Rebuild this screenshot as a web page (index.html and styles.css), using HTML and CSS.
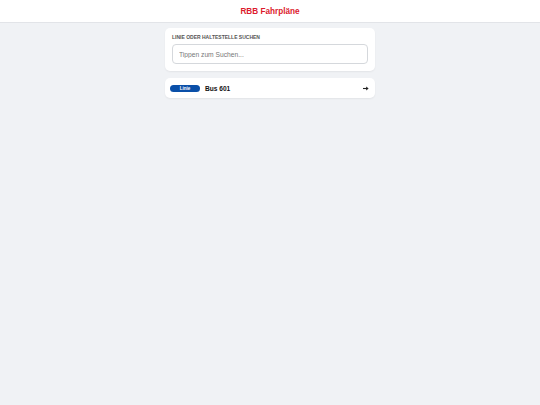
FILE: index.html
```html
<!DOCTYPE html>
<html lang="de">
<head>
    <meta charset="UTF-8">
    <meta name="viewport" content="width=device-width, initial-scale=1.0">
    <title>RBB Fahrpläne</title>
    <link rel="stylesheet" href="styles.css">
</head>
<body>
    <header class="top-bar">
        <h1>RBB Fahrpläne</h1>
    </header>
    <main class="container">
        <div class="card search-card">
            <label for="searchInput" class="search-label">Linie oder Haltestelle suchen</label>
            <input type="text" id="searchInput" placeholder="Tippen zum Suchen...">
        </div>
        <div class="card line-row">
            <span class="badge">Linie</span>
            <span class="line-name">Bus 601</span>
            <svg class="arrow" width="6" height="5" viewBox="0 0 6 5">
                <path d="M0 2.5H4.2" stroke="#222" stroke-width="1.1"/>
                <path d="M3.2 0.6L5.6 2.5L3.2 4.4Z" fill="#222"/>
            </svg>
        </div>
    </main>
</body>
</html>
```

FILE: styles.css
```css
body {
    font-family: "Liberation Sans", Arial, sans-serif;
    margin: 0;
    padding: 0;
    background-color: #f0f2f5;
    color: #222;
}
.top-bar {
    height: 22px;
    background: #fff;
    border-bottom: 1px solid #e2e4e8;
    display: flex;
    align-items: center;
    justify-content: center;
}
.top-bar h1 {
    margin: 0;
    font-size: 8.2px;
    font-weight: bold;
    color: #dc1a2e;
}
.container {
    width: 210px;
    margin: 5px auto;
    display: flex;
    flex-direction: column;
    gap: 7px;
}
.card {
    background: #fff;
    border-radius: 5px;
    box-shadow: 0 1px 2px rgba(0, 0, 0, 0.06);
}
.search-card {
    padding: 7px;
    display: flex;
    flex-direction: column;
}
.search-label {
    font-size: 5px;
    font-weight: bold;
    text-transform: uppercase;
    color: #555;
    line-height: 5px;
    margin-bottom: 4px;
}
.search-card input {
    height: 20px;
    box-sizing: border-box;
    border: 1px solid #d5d8dc;
    border-radius: 4px;
    padding: 0 6px;
    font-family: inherit;
    font-size: 6.7px;
    color: #222;
    outline: none;
}
.search-card input::placeholder {
    color: #777;
}
.line-row {
    height: 20px;
    padding: 0 6px 0 5px;
    display: flex;
    align-items: center;
    gap: 5px;
}
.badge {
    width: 30px;
    height: 7px;
    border-radius: 4px;
    background: #0a4fa8;
    color: #fff;
    font-size: 4.5px;
    font-weight: bold;
    display: flex;
    align-items: center;
    justify-content: center;
}
.line-name {
    font-size: 6.6px;
    font-weight: bold;
    color: #111;
    flex: 1;
}
.arrow {
    display: block;
}
```
